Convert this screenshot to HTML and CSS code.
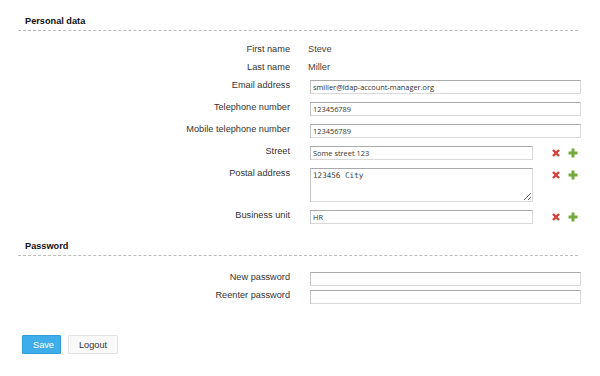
FILE: index.html
```html
<!DOCTYPE html>
<html lang="en">
<head>
    <meta charset="UTF-8">
    <title>Self service</title>
    <link rel="stylesheet" href="styles.css">
</head>
<body>
    <form class="page">
        <div class="section-title">Personal data</div>
        <div class="form-grid">
            <div class="label">First name</div>
            <div class="value">Steve</div>

            <div class="label">Last name</div>
            <div class="value">Miller</div>

            <div class="label">Email address</div>
            <div class="field"><input type="text" class="wide" value="smiller@ldap-account-manager.org"></div>

            <div class="label">Telephone number</div>
            <div class="field"><input type="text" class="wide" value="123456789"></div>

            <div class="label">Mobile telephone number</div>
            <div class="field"><input type="text" class="wide" value="123456789"></div>

            <div class="label">Street</div>
            <div class="field">
                <input type="text" class="narrow" value="Some street 123">
                <span class="icons">
                    <svg class="icon-del" width="8" height="8" viewBox="0 0 8 8"><path d="M1 1L7 7M7 1L1 7"/></svg>
                    <svg class="icon-add" width="10" height="10" viewBox="0 0 10 10"><path d="M5 0.5V9.5M0.5 5H9.5"/></svg>
                </span>
            </div>

            <div class="label">Postal address</div>
            <div class="field">
                <textarea class="narrow">123456 City</textarea>
                <span class="icons">
                    <svg class="icon-del" width="8" height="8" viewBox="0 0 8 8"><path d="M1 1L7 7M7 1L1 7"/></svg>
                    <svg class="icon-add" width="10" height="10" viewBox="0 0 10 10"><path d="M5 0.5V9.5M0.5 5H9.5"/></svg>
                </span>
            </div>

            <div class="label">Business unit</div>
            <div class="field">
                <input type="text" class="narrow" value="HR">
                <span class="icons">
                    <svg class="icon-del" width="8" height="8" viewBox="0 0 8 8"><path d="M1 1L7 7M7 1L1 7"/></svg>
                    <svg class="icon-add" width="10" height="10" viewBox="0 0 10 10"><path d="M5 0.5V9.5M0.5 5H9.5"/></svg>
                </span>
            </div>
        </div>

        <div class="section-title password-title">Password</div>
        <div class="form-grid password-grid">
            <div class="label">New password</div>
            <div class="field"><input type="password" class="wide"></div>

            <div class="label">Reenter password</div>
            <div class="field"><input type="password" class="wide"></div>
        </div>

        <div class="buttons">
            <button type="button" class="btn btn-save">Save</button>
            <button type="button" class="btn btn-logout">Logout</button>
        </div>
    </form>
</body>
</html>
```
FILE: styles.css
```css
body {
    margin: 0;
    font-family: "Liberation Sans", Arial, sans-serif;
    font-size: 9.2px;
    color: #333;
    background: #fff;
}
.page {
    padding-top: 15px;
}
.section-title {
    margin-left: 18px;
    width: 553px;
    padding: 0 0 3px 7px;
    line-height: 12px;
    font-weight: bold;
    color: #111;
    border-bottom: 1px dashed #bbb;
}
.password-title {
    margin-top: 15px;
}
.form-grid {
    display: grid;
    grid-template-columns: 290px 271px;
    column-gap: 20px;
    row-gap: 6px;
    margin-top: 12px;
}
.password-grid {
    margin-top: 15px;
    row-gap: 2px;
}
.label {
    text-align: right;
    line-height: 12px;
    color: #333;
}
.value {
    line-height: 12px;
    color: #444;
    margin-left: -2px;
}
.field {
    display: flex;
    align-items: flex-start;
    padding: 1px 0;
}
input, textarea {
    box-sizing: border-box;
    margin: 0;
    height: 14px;
    padding: 0 2px;
    border: 1px solid #d9d9d9;
    border-top-color: #aaa;
    border-left-color: #c4c4c4;
    background: #fff;
    color: #333;
    font-family: "Open Sans", sans-serif;
    font-size: 7.4px;
    outline: none;
}
.wide {
    width: 271px;
}
.narrow {
    width: 223px;
}
textarea {
    height: 34px;
    padding: 2px;
    font-family: "DejaVu Sans Mono", monospace;
    font-size: 7.6px;
    line-height: 10px;
    color: #444;
}
.icons {
    display: flex;
    align-items: center;
    gap: 8px;
    margin-left: 19px;
    margin-top: 2px;
}
.icon-del path {
    stroke: #d9413b;
    stroke-width: 2.4;
    fill: none;
}
.icon-add path {
    stroke: #72ab3c;
    stroke-width: 3;
    fill: none;
}
.buttons {
    display: flex;
    gap: 7px;
    margin: 30px 0 0 22px;
}
.btn {
    height: 19px;
    padding: 0 10px;
    font-family: "Liberation Sans", Arial, sans-serif;
    font-size: 9.2px;
    border-radius: 1px;
    cursor: pointer;
}
.btn-save {
    width: 39px;
    background: #3daee9;
    border: 1px solid #2f9ed8;
    color: #fff;
}
.btn-logout {
    width: 50px;
    background: #f9f9f9;
    border: 1px solid #e3e3e3;
    color: #333;
}
```
